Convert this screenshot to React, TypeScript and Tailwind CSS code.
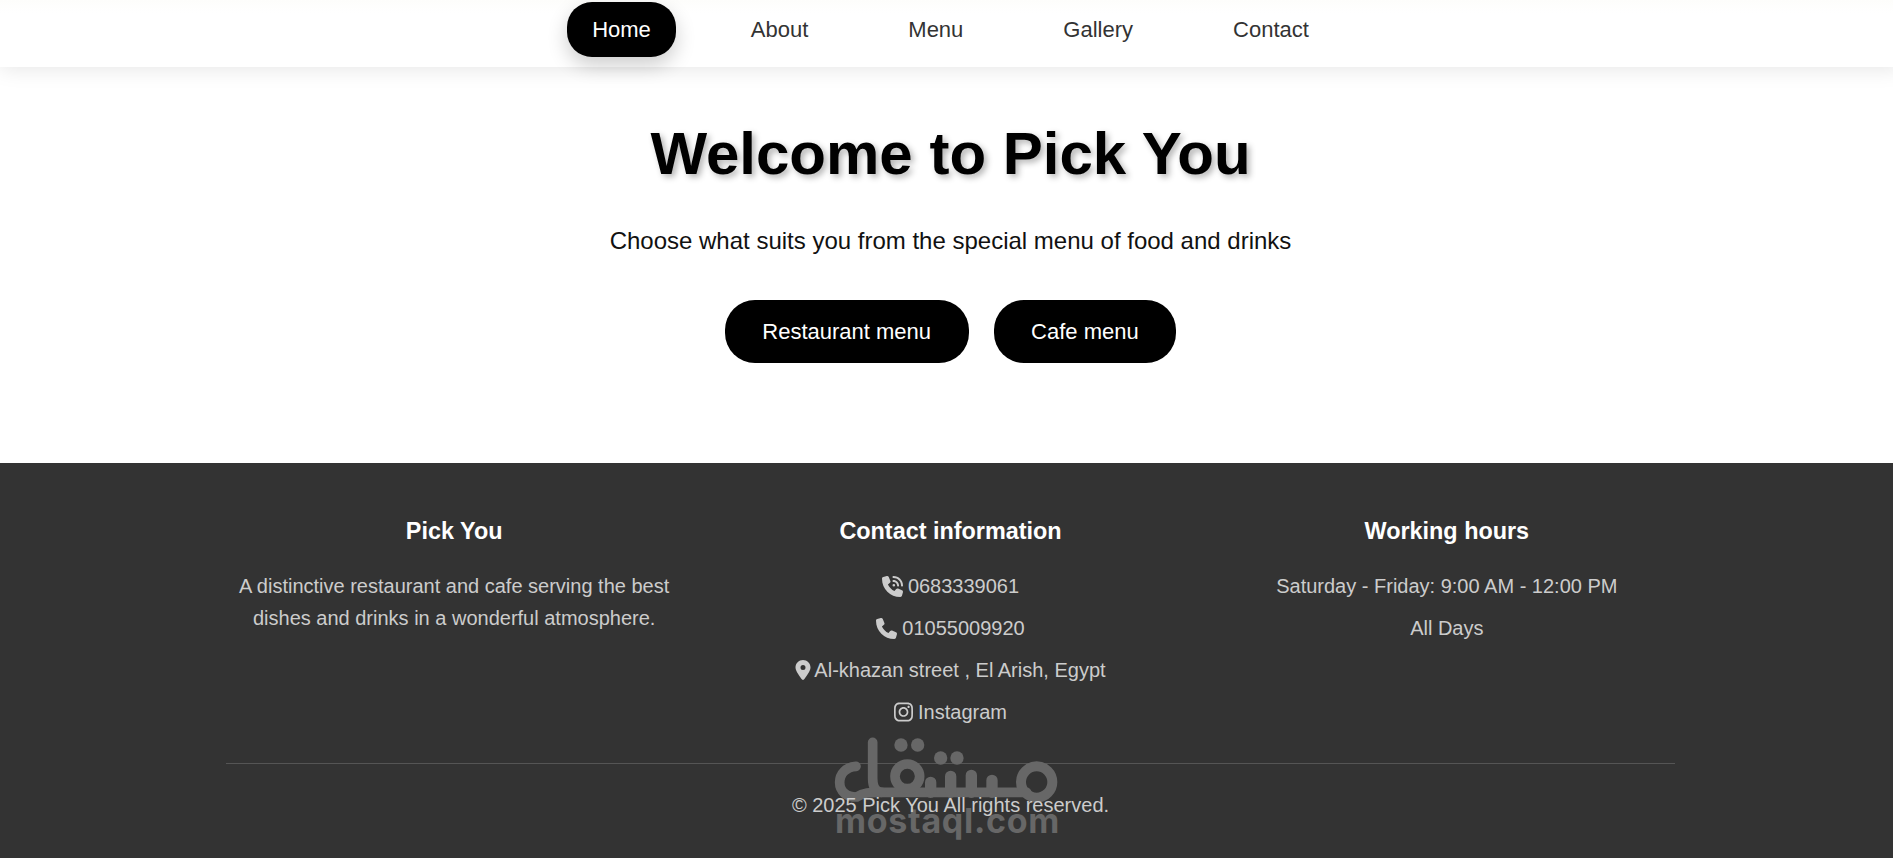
import { FaPhoneVolume, FaPhone, FaLocationDot, FaInstagram } from "react-icons/fa6";

function Logo() {
  return (
    <div className="absolute left-[830px] top-[733px] w-[235px] flex flex-col items-center pointer-events-none">
      <svg width="235" height="72" viewBox="0 0 705 216" fill="none" stroke="#676767" strokeWidth="29" strokeLinecap="round" strokeLinejoin="round" aria-label="mostaql logo">
        <path d="M78 100 C48 102 29 122 29 148 C29 176 50 192 80 192 C100 178 120 178 150 178 H590" />
        <path d="M128 28 V136 C128 160 135 178 155 178" />
        <circle cx="232" cy="130" r="37" />
        <circle cx="620" cy="147" r="47" strokeWidth="30" />
        <path d="M302 178 V148 M362 178 V130 M424 178 V127 M486 178 V142" strokeWidth="34" />
        <circle cx="213" cy="36" r="20" fill="#676767" stroke="none" />
        <circle cx="263" cy="36" r="20" fill="#676767" stroke="none" />
        <circle cx="332" cy="75" r="20" fill="#676767" stroke="none" />
        <circle cx="381" cy="75" r="20" fill="#676767" stroke="none" />
      </svg>
      <div className="font-['Inter',sans-serif] font-bold text-[34px] leading-[34px] tracking-[0.7px] text-[#676767] -mt-[1px] whitespace-nowrap">mostaql.com</div>
    </div>
  );
}

function Row({ children }: { children: React.ReactNode }) {
  return <p className="flex items-center justify-center gap-[5px] h-[42px] text-[#cccccc]">{children}</p>;
}

export default function App() {
  const links = ["About", "Menu", "Gallery", "Contact"];
  return (
    <div className="h-screen overflow-hidden bg-white">
      <div className="relative w-[1901px] min-h-[858px] font-['Liberation_Sans',Arial,sans-serif]">
        <nav className="relative h-[67px] bg-linear-to-b from-[#fdfdfb] to-white to-[20%] shadow-[0_2px_20px_rgba(0,0,0,0.1)] flex justify-center items-start pt-[2px] gap-[50px] text-[22px]">
          <a className="h-[55px] px-[25px] flex items-center rounded-[25px] bg-black text-white shadow-[0_8px_20px_rgba(0,0,0,0.2)]">Home</a>
          {links.map((l) => (
            <a key={l} className="h-[55px] px-[25px] flex items-center text-[#333333]">{l}</a>
          ))}
        </nav>
        <section className="h-[396px] pt-[52px] flex flex-col items-center text-black">
          <h1 className="text-[60px] leading-[69px] font-bold [text-shadow:3px_3px_6px_rgba(0,0,0,0.3)]">Welcome to Pick You</h1>
          <p className="mt-[39px] text-[24px] leading-[28px] text-[#111111]">Choose what suits you from the special menu of food and drinks</p>
          <div className="mt-[45px] flex gap-[25px]">
            <a className="h-[63px] px-[37.5px] flex items-center rounded-[30px] bg-black text-white text-[22px]">Restaurant menu</a>
            <a className="h-[63px] px-[37.5px] flex items-center rounded-[30px] bg-black text-white text-[22px]">Cafe menu</a>
          </div>
        </section>
        <footer className="h-[395px] bg-[#333333] text-[20px] text-center px-[226px]">
          <div className="grid grid-cols-3 gap-[40px] pt-[55px] h-[301px] border-b border-[#555555]">
            <div>
              <h3 className="text-[23.4px] leading-[27px] font-bold text-white mb-[25px]">Pick You</h3>
              <p className="text-[#cccccc] leading-[32px]">A distinctive restaurant and cafe serving the best dishes and drinks in a wonderful atmosphere.</p>
            </div>
            <div>
              <h3 className="text-[23.4px] leading-[27px] font-bold text-white mb-[20px]">Contact information</h3>
              <Row><FaPhoneVolume size={21} />0683339061</Row>
              <Row><FaPhone size={21} />01055009920</Row>
              <Row><FaLocationDot size={20} className="w-[16px] -mr-[2px]" />Al-khazan street , El Arish, Egypt</Row>
              <Row><FaInstagram size={22} className="w-[19px]" />Instagram</Row>
            </div>
            <div>
              <h3 className="text-[23.4px] leading-[27px] font-bold text-white mb-[20px]">Working hours</h3>
              <Row>Saturday - Friday: 9:00 AM - 12:00 PM</Row>
              <Row>All Days</Row>
            </div>
          </div>
          <Logo />
          <p className="relative pt-[26px] text-[#cccccc]">© 2025 Pick You All rights reserved.</p>
        </footer>
      </div>
    </div>
  );
}
